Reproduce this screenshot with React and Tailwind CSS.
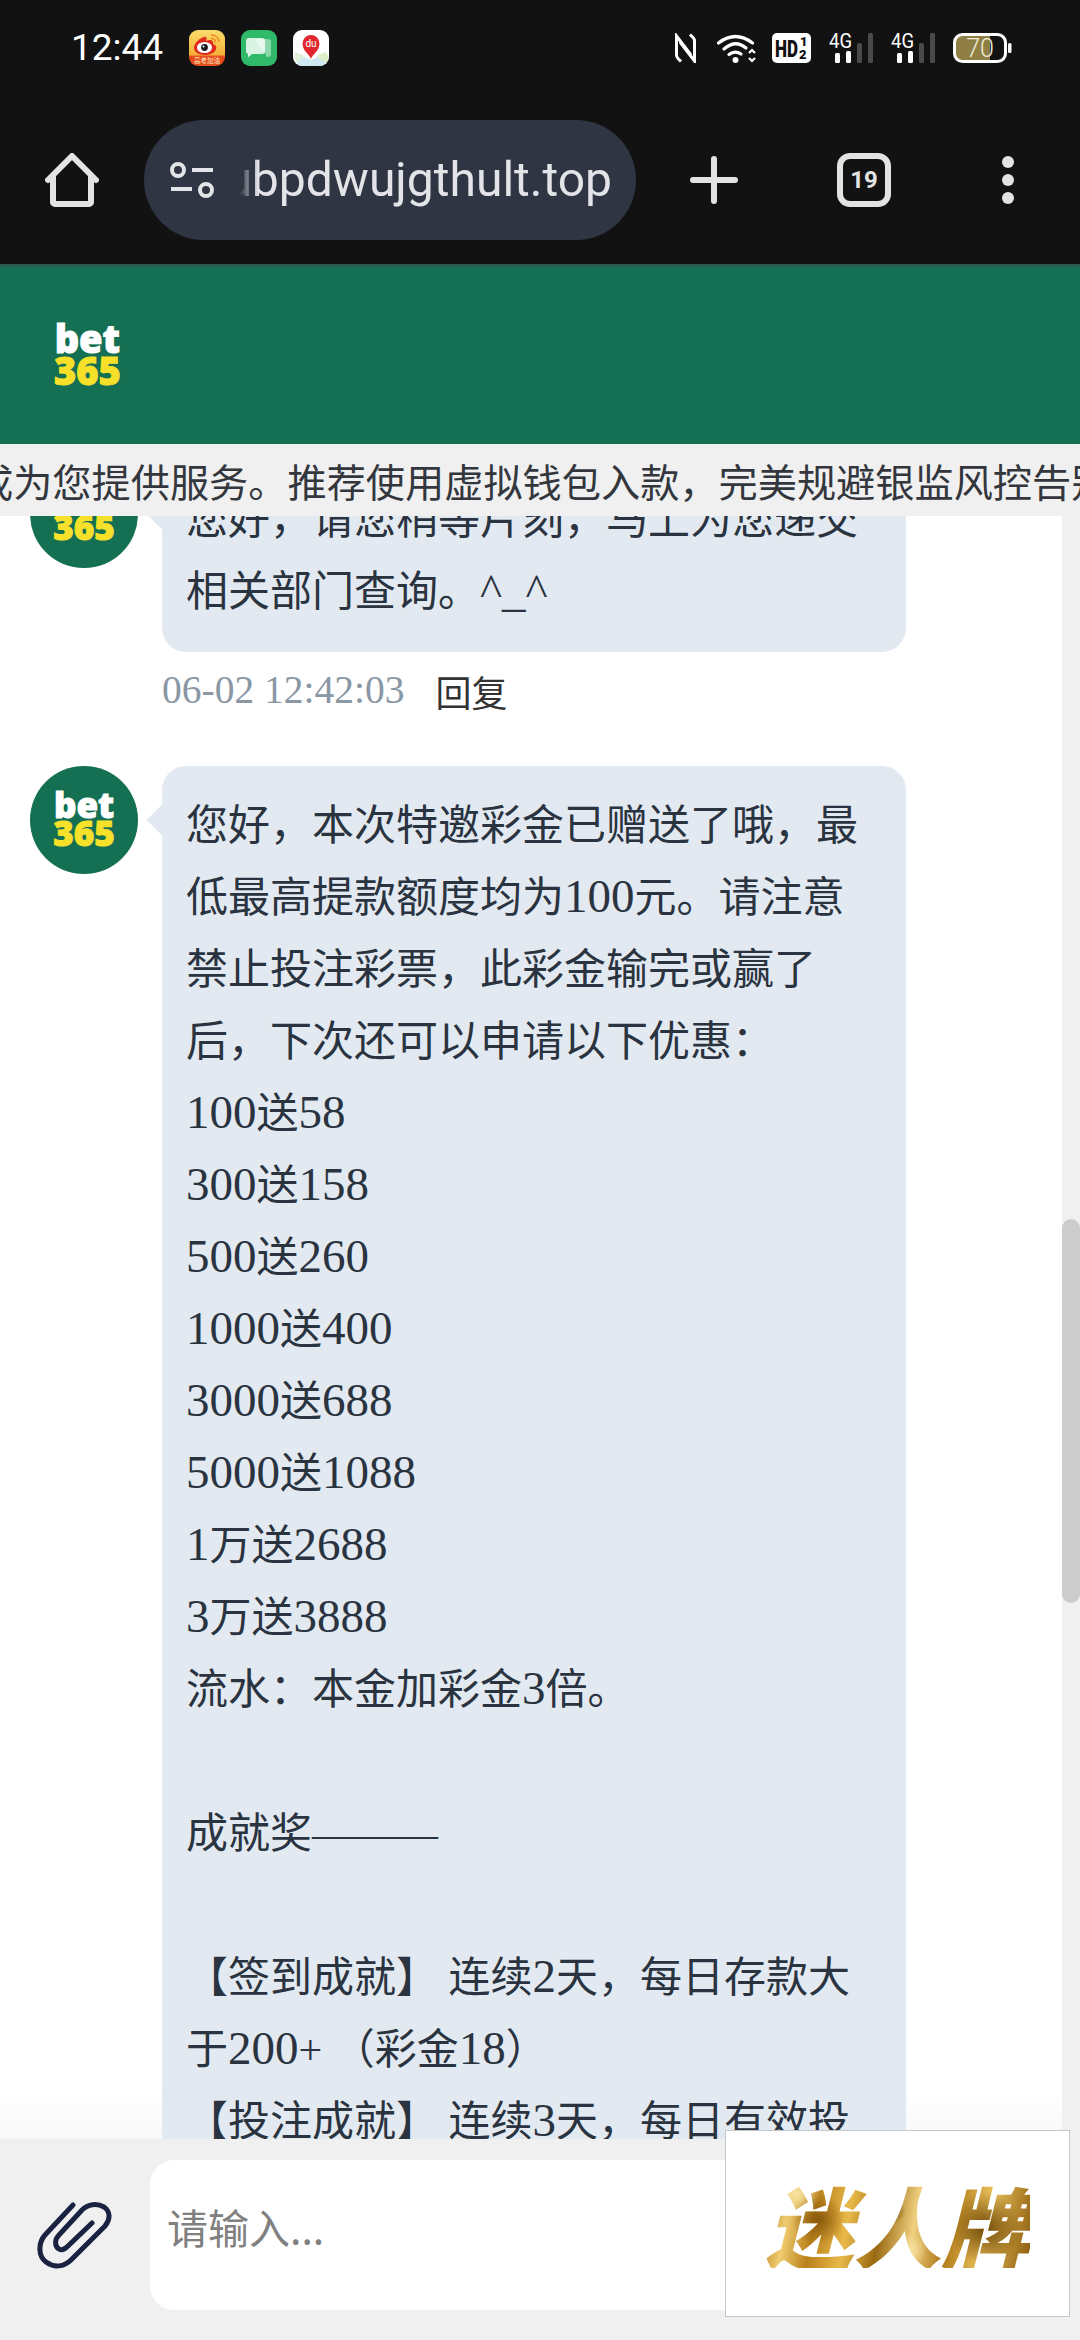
import React from "react";

const msg2 = [
  "您好，本次特邀彩金已赠送了哦，最",
  "低最高提款额度均为100元。请注意",
  "禁止投注彩票，此彩金输完或赢了",
  "后，下次还可以申请以下优惠：",
  "100送58",
  "300送158",
  "500送260",
  "1000送400",
  "3000送688",
  "5000送1088",
  "1万送2688",
  "3万送3888",
  "流水：本金加彩金3倍。",
  "",
  "成就奖———",
  "",
  "【签到成就】 连续2天，每日存款大",
  "于200+ （彩金18）",
  "【投注成就】 连续3天，每日有效投",
];

function Line({ text }) {
  const parts = text.split(/([\d^_]+)/);
  return (
    <div className="h-[72px] leading-[72px] whitespace-pre">
      {parts.map((p, i) =>
        /^[\d^_]+$/.test(p) ? (
          <span key={i} className="text-[47px] leading-none">{p}</span>
        ) : (
          <span key={i}>{p}</span>
        )
      )}
    </div>
  );
}

function Avatar() {
  return (
    <div className="w-[108px] h-[108px] rounded-full bg-[#146f53] shrink-0 flex flex-col items-center justify-center font-['Open_Sans',sans-serif] font-extrabold text-[35px] leading-[28px] [-webkit-text-stroke:1px_currentColor]">
      <span className="text-white -mt-[2px]">bet</span>
      <span className="text-[#f6e02a]">365</span>
    </div>
  );
}

function Bubble({ lines }) {
  return (
    <div className="relative w-[744px] shrink-0 rounded-[24px] bg-[#e2e9f1] px-[24px] py-[24px] text-[42px] text-[#2a3340] font-['Liberation_Serif','Noto_Sans_CJK_SC',serif]">
      <div className="absolute -left-[11px] top-[43px] w-[22px] h-[22px] rotate-45 bg-[#e2e9f1]" />
      <div className="relative">
        {lines.map((l, i) => (
          <Line key={i} text={l} />
        ))}
      </div>
    </div>
  );
}

function Weibo() {
  return (
    <svg width="36" height="36" viewBox="0 0 36 36">
      <defs>
        <linearGradient id="wb" x1="0" y1="0" x2="0" y2="1">
          <stop offset="0" stopColor="#f9dc6a" />
          <stop offset="0.68" stopColor="#f6b13a" />
          <stop offset="0.74" stopColor="#e8481c" />
          <stop offset="1" stopColor="#e8501c" />
        </linearGradient>
      </defs>
      <rect width="36" height="36" rx="9" fill="url(#wb)" />
      <path d="M5 18c0-5 6-10 10-11 3-1 3 2 2 4 4-2 8-1 7 3 3 1 4 3 3 5-1 4-7 6-11 6-6 0-11-3-11-7z" fill="#e02a1e" />
      <ellipse cx="15.5" cy="17.5" rx="7.5" ry="5.5" fill="#fff" />
      <circle cx="15.5" cy="17.5" r="3.4" fill="#1a1a1a" />
      <circle cx="14.5" cy="16.5" r="1" fill="#fff" />
      <path d="M22 5c5 0 8 3 8 7M22 8.5c3 0 4.5 1.5 4.5 4" stroke="#ef8a1c" strokeWidth="1.5" fill="none" />
      <text x="18" y="33" textAnchor="middle" fontSize="6.5" fill="#ffe9c4" fontFamily="'Noto Sans CJK SC', sans-serif">高考加油</text>
    </svg>
  );
}

function Messages() {
  return (
    <svg width="36" height="36" viewBox="0 0 36 36">
      <rect width="36" height="36" rx="9" fill="#2fb968" />
      <path d="M14 9h13a3 3 0 0 1 3 3v12a3 3 0 0 1-3 3l-2-1v-1z" fill="#fff" fillOpacity="0.45" />
      <path d="M8 8h13a3 3 0 0 1 3 3v10a3 3 0 0 1-3 3H11l-4 3.5V24a3 3 0 0 1-2-3V11a3 3 0 0 1 3-3z" fill="#fff" fillOpacity="0.82" />
    </svg>
  );
}

function BaiduMap() {
  return (
    <svg width="36" height="36" viewBox="0 0 36 36">
      <rect width="36" height="36" rx="9" fill="#fff" />
      <path d="M3 31l9-4 6 3 6-3 9 4v-1a6 6 0 0 1-6 6H9a6 6 0 0 1-6-6z" fill="#cfe9f3" />
      <path d="M23 26l10-4 3 6-3 5z" fill="#dcefc8" />
      <path d="M12 26l-10-4-1 5 3 5z" fill="#e2f0d8" />
      <path d="M18 29c-1.5-5-8.5-8-8.5-15.5a8.5 8.5 0 0 1 17 0c0 7.5-7 10.5-8.5 15.5z" fill="#e0262f" />
      <text x="18" y="16.5" textAnchor="middle" fontSize="10" fill="#fff" fontFamily="Roboto, sans-serif">du</text>
    </svg>
  );
}

function Signal() {
  return (
    <svg width="44" height="30" viewBox="0 0 44 30" className="shrink-0">
      <text x="0" y="15" fontSize="20" fill="#fff" fontFamily="Roboto, sans-serif" textLength="23" lengthAdjust="spacingAndGlyphs">4G</text>
      <rect x="6" y="20" width="5" height="10" rx="1.5" fill="#fff" />
      <rect x="17" y="18" width="5" height="12" rx="1.5" fill="#fff" />
      <rect x="28" y="10" width="5" height="20" rx="1.5" fill="#4a4a4a" />
      <rect x="39" y="0" width="5" height="30" rx="1.5" fill="#4a4a4a" />
    </svg>
  );
}

export default function App() {
  return (
    <div className="relative w-[1080px] h-[2340px] overflow-hidden flex flex-col bg-white font-['Noto_Sans_CJK_SC',sans-serif]">
      {/* status bar */}
      <div className="h-[96px] shrink-0 bg-[#121212] flex items-center justify-between pl-[71px] pr-[68px]">
        <div className="flex items-center">
          <span className="text-white text-[37px] w-[91px] font-['Roboto',sans-serif] font-normal whitespace-nowrap">12:44</span>
          <div className="flex items-center gap-[16px] ml-[27px]">
            <Weibo />
            <Messages />
            <BaiduMap />
          </div>
        </div>
        <div className="flex items-center">
          <svg width="21" height="30" viewBox="0 0 21 30" fill="none" stroke="#fff" strokeWidth="3">
            <path d="M6 28.5L3 25.5Q1.5 24 1.5 22V3L16 22" />
            <path d="M15 1.5L18 4.5Q19.5 6 19.5 8V28L5 9" />
          </svg>
          <svg width="40" height="30" viewBox="0 0 40 30" fill="none" className="ml-[21px]">
            <path d="M1.5 10Q18.5 -3 35.5 10" stroke="#fff" strokeWidth="3.2" strokeLinecap="round" />
            <path d="M7 16Q18.5 6 29 15" stroke="#fff" strokeWidth="3.2" strokeLinecap="round" />
            <path d="M12 21.5Q18 17 24 21" stroke="#fff" strokeWidth="3.2" strokeLinecap="round" />
            <circle cx="18.5" cy="27" r="3" fill="#fff" />
            <path d="M32 20l3-3 3 3M32 25l3 3 3-3" stroke="#fff" strokeWidth="2.2" />
          </svg>
          <svg width="39" height="30" viewBox="0 0 39 30" className="ml-[15px]">
            <rect width="39" height="30" rx="5" fill="#fff" />
            <text x="3" y="24" fontSize="23" fontWeight="900" fill="#121212" fontFamily="Roboto, sans-serif" textLength="23" lengthAdjust="spacingAndGlyphs">HD</text>
            <text x="28" y="13" fontSize="13" fontWeight="900" fill="#121212" fontFamily="Roboto, sans-serif">1</text>
            <text x="27" y="26" fontSize="13" fontWeight="900" fill="#121212" fontFamily="Roboto, sans-serif">2</text>
          </svg>
          <div className="ml-[18px] flex"><Signal /></div>
          <div className="ml-[18px] flex"><Signal /></div>
          <svg width="59" height="30" viewBox="0 0 59 30" className="ml-[18px]">
            <path d="M9 1.5H37V28.5H9a7.5 7.5 0 0 1-7.5-7.5V9A7.5 7.5 0 0 1 9 1.5z" fill="#8f7f45" />
            <rect x="1.5" y="1.5" width="51" height="27" rx="8" fill="none" stroke="#fff" strokeWidth="3" />
            <rect x="55" y="10" width="3.5" height="10" rx="1.5" fill="#fff" />
            <text x="27" y="24" textAnchor="middle" fontSize="25" fill="#f0ecd8" fontFamily="Roboto, sans-serif" fontWeight="300">70</text>
          </svg>
        </div>
      </div>

      {/* browser toolbar */}
      <div className="h-[168px] shrink-0 bg-[#121212] flex items-center pl-[45px]">
        <svg width="54" height="54" viewBox="0 0 54 54" fill="none" stroke="#e3e3e3" strokeWidth="6" strokeLinecap="round" strokeLinejoin="round" className="shrink-0">
          <path d="M3 27L27 3L51 27" />
          <path d="M8 24V49a2 2 0 0 0 2 2H44a2 2 0 0 0 2-2V24" />
        </svg>
        <div className="ml-[45px] w-[492px] h-[120px] shrink-0 rounded-full bg-[#2f3542] flex items-center pl-[26px] overflow-hidden">
          <svg width="44" height="36" viewBox="0 0 44 36" fill="none" stroke="#e2e4e8" strokeWidth="4" className="shrink-0">
            <circle cx="8" cy="8" r="6" />
            <path d="M22 8H43" />
            <path d="M1 27H22" />
            <circle cx="36" cy="28" r="6" />
          </svg>
          <div className="ml-[26px] w-[372px] flex justify-end overflow-hidden whitespace-nowrap [mask-image:linear-gradient(90deg,transparent,#000_18px)]">
            <span className="text-[48px] text-[#e2e4e8] font-['Roboto',sans-serif] leading-[60px]">ubpdwujgthult.top</span>
          </div>
        </div>
        <svg width="48" height="48" viewBox="0 0 48 48" stroke="#e3e3e3" strokeWidth="6" strokeLinecap="round" className="ml-[54px] shrink-0">
          <path d="M24 3V45M3 24H45" />
        </svg>
        <div className="ml-[99px] w-[54px] h-[54px] shrink-0 rounded-[13px] border-[6px] border-[#e3e3e3] flex items-center justify-center text-[#e3e3e3] text-[24px] font-bold font-['Roboto',sans-serif] leading-none">19</div>
        <div className="ml-[111px] flex flex-col gap-[6px] shrink-0">
          <div className="w-[12px] h-[12px] rounded-full bg-[#e3e3e3]" />
          <div className="w-[12px] h-[12px] rounded-full bg-[#e3e3e3]" />
          <div className="w-[12px] h-[12px] rounded-full bg-[#e3e3e3]" />
        </div>
      </div>
      <div className="h-[3px] shrink-0 bg-[#2c5c4e]" />

      {/* site header */}
      <div className="h-[177px] shrink-0 bg-[#146f53] flex items-center pl-[54px]">
        <div className="flex flex-col items-center font-['Open_Sans',sans-serif] font-extrabold text-[38px] leading-[32px] [-webkit-text-stroke:1px_currentColor]">
          <span className="text-white -mt-[3px]">bet</span>
          <span className="text-[#f6e02a]">365</span>
        </div>
      </div>

      {/* notice */}
      <div className="relative z-10 h-[72px] shrink-0 bg-[#f0f0f0] overflow-hidden flex items-center whitespace-nowrap text-[39.2px] text-[#33373d]">
        <span className="-ml-[26px]">成为您提供服务。推荐使用虚拟钱包入款，完美规避银监风控告别</span>
      </div>

      {/* chat */}
      <div className="flex-1 min-h-0 flex overflow-hidden">
        <div className="flex-1 min-w-0 overflow-hidden bg-[linear-gradient(#fff_97%,#f8f8f8_100%)]">
          <div className="-mt-[56px] pl-[30px]">
            <div className="flex gap-[24px]">
              <Avatar />
              <div>
                <Bubble lines={["您好，请您稍等片刻，马上为您递交", "相关部门查询。^_^"]} />
                <div className="h-[78px] flex items-center mb-[36px]">
                  <span className="text-[39.5px] text-[#8a97a5] font-['Liberation_Serif',serif] whitespace-nowrap">06-02 12:42:03</span>
                  <span className="ml-[31px] text-[36px] text-[#333]">回复</span>
                </div>
              </div>
            </div>
            <div className="flex gap-[24px]">
              <Avatar />
              <Bubble lines={msg2} />
            </div>
          </div>
        </div>
        <div className="w-[18px] shrink-0 bg-[#f0f0f0]">
          <div className="mt-[703px] h-[384px] rounded-[9px] bg-[#cccccc]" />
        </div>
      </div>

      {/* input bar */}
      <div className="relative z-10 h-[201px] shrink-0 bg-[#f0f0f0] flex items-start pt-[21px]">
        <svg width="76" height="68" viewBox="0 0 76 68" fill="none" stroke="#1a2242" strokeWidth="5" strokeLinecap="round" className="ml-[37px] mt-[42px] shrink-0">
          <path d="M36 3L8 33C1 41 1 54 9 60C17 66 27 65 34 58L68 24C74 17 73 9 67 5C60 1 51 2 45 8L22 33C17 38 18 45 22 47C25 49 28 47 31 44L55 21" />
        </svg>
        <div className="ml-[37px] w-[700px] h-[150px] rounded-[24px] bg-white flex items-center pl-[17px] pb-[16px] text-[41px] text-[#808080]">请输入...</div>
      </div>

      {/* floating ad */}
      <div className="absolute z-20 left-[725px] top-[2130px] w-[345px] h-[187px] bg-white border border-[#c4c6ca] flex items-center justify-center">
        <span className="italic font-black text-[88px] leading-none whitespace-nowrap text-transparent bg-clip-text bg-[radial-gradient(circle_at_20%_45%,#8a5a0c_0,transparent_12%),radial-gradient(circle_at_48%_35%,#7c5008_0,transparent_9%),radial-gradient(circle_at_55%_80%,#f7e2a0_0,transparent_10%),radial-gradient(circle_at_83%_55%,#6e4706_0,transparent_16%),radial-gradient(circle_at_12%_15%,#f7e2a0_0,transparent_10%),linear-gradient(100deg,#a86e10,#f0cc70_10%,#b9801a_20%,#e9b94a_32%,#9a6a12_44%,#f0d080_56%,#b07a18_68%,#e8bf5a_82%,#8a5a0c)]">迷人牌</span>
      </div>
    </div>
  );
}
